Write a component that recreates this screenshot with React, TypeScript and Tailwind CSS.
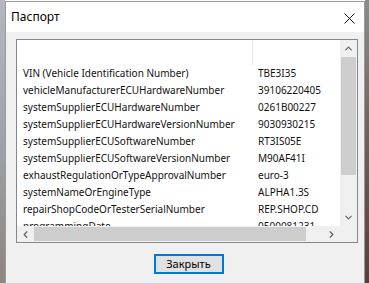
import { ChevronUp, ChevronDown, ChevronLeft, ChevronRight } from "lucide-react";

const rows: [string, string][] = [
    ["VIN (Vehicle Identification Number)", "TBE3I35"],
    ["vehicleManufacturerECUHardwareNumber", "39106220405"],
    ["systemSupplierECUHardwareNumber", "0261B00227"],
    ["systemSupplierECUHardwareVersionNumber", "9030930215"],
    ["systemSupplierECUSoftwareNumber", "RT3IS05E"],
    ["systemSupplierECUSoftwareVersionNumber", "M90AF41I"],
    ["exhaustRegulationOrTypeApprovalNumber", "euro-3"],
    ["systemNameOrEngineType", "ALPHA1.3S"],
    ["repairShopCodeOrTesterSerialNumber", "REP.SHOP.CD"],
    ["programmingDate", "0500081231"],
];

function TitleBar() {
    return (
        <div className="h-[30px] bg-white flex items-center justify-between pl-[5px] pr-[9px] shrink-0">
            <span className="text-[12px] text-black">Паспорт</span>
            <svg width="11" height="11" viewBox="0 0 11 11" className="mt-[3px]">
                <path d="M0.5 0.5 L10.5 10.5 M10.5 0.5 L0.5 10.5" stroke="#111" strokeWidth="1" fill="none" />
            </svg>
        </div>
    );
}

function ListBox() {
    return (
        <div className="h-[204px] border border-[#828790] bg-white grid grid-cols-[1fr_17px] grid-rows-[1fr_16px]">
            <div className="overflow-hidden">
                <div className="h-[25px] flex">
                    <div className="w-[236px] border-r border-[#e5e5e5]" />
                </div>
                {rows.map(([k, v]) => (
                    <div key={k} className="h-[17px] flex items-center text-[10px] text-[#111] whitespace-nowrap">
                        <div className="w-[237px] pl-[6px] overflow-hidden">{k}</div>
                        <div className="pl-[4px]">{v}</div>
                    </div>
                ))}
            </div>
            <div className="bg-[#f0f0f0] flex flex-col">
                <div className="h-[17px] flex items-center justify-center text-[#606060]">
                    <ChevronUp size={11} strokeWidth={2.5} />
                </div>
                <div className="h-[118px] mx-[1px] bg-[#cdcdcd]" />
                <div className="flex-1" />
                <div className="h-[17px] flex items-center justify-center text-[#606060]">
                    <ChevronDown size={11} strokeWidth={2.5} />
                </div>
            </div>
            <div className="bg-[#f0f0f0] flex">
                <div className="w-[17px] flex items-center justify-center text-[#606060]">
                    <ChevronLeft size={11} strokeWidth={2.5} />
                </div>
                <div className="w-[272px] my-[1px] bg-[#cdcdcd]" />
                <div className="flex-1" />
                <div className="w-[17px] flex items-center justify-center text-[#606060]">
                    <ChevronRight size={11} strokeWidth={2.5} />
                </div>
            </div>
            <div className="bg-[#f0f0f0]" />
        </div>
    );
}

export default function App() {
    return (
        <div className="w-[369px] h-[283px] flex overflow-hidden" style={{ fontFamily: '"Noto Sans", "Open Sans", sans-serif' }}>
            <div className="w-[5px] bg-gradient-to-b from-[#b4b8bc] via-[#9ea3a8] to-[#8d8580]" />
            <div className="w-[360px] flex flex-col border border-b-0 border-[#9a9a9a] mt-[1px]">
                <TitleBar />
                <div className="flex-1 bg-[#f0f0f0] flex flex-col pl-[10px] pr-[6px] pt-[7px]">
                    <ListBox />
                    <div className="flex justify-center mt-[11px] pl-[3px]">
                        <button className="w-[70px] h-[20px] border-2 border-[#0078d7] bg-[#e1e1e1] text-[11px] text-black flex items-center justify-center">
                            Закрыть
                        </button>
                    </div>
                </div>
            </div>
            <div className="flex-1 bg-gradient-to-b from-[#8c8c8c] via-[#6e5f5a] to-[#5a3d38]" />
        </div>
    );
}
